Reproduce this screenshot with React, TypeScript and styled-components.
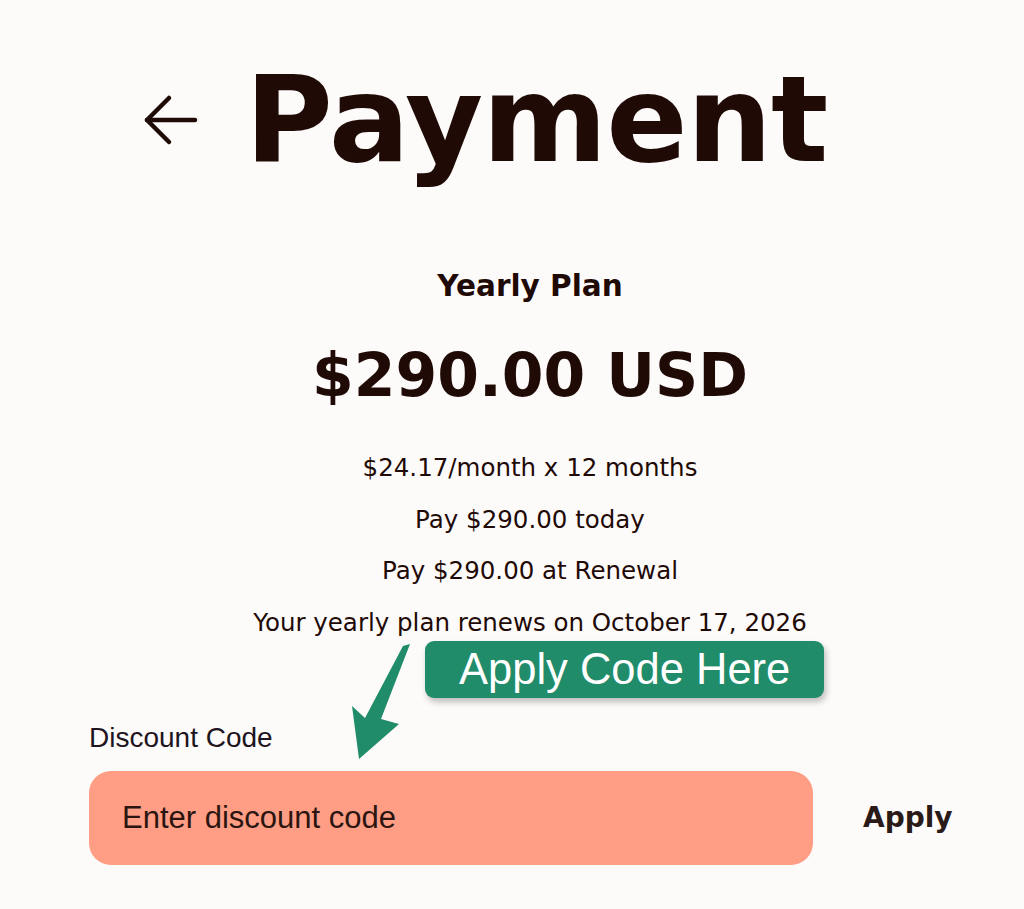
import React from "react";
import styled, { createGlobalStyle } from "styled-components";

const Global = createGlobalStyle`
  html, body { margin: 0; padding: 0; background: #fdfbfa; }
  body { font-family: "DejaVu Sans", Verdana, sans-serif; color: #1f0a06; }
`;

const Page = styled.main`
  width: 882px;
  margin-left: 89px;
  padding-top: 40px;
  display: flex;
  flex-direction: column;
`;

const Header = styled.header`
  display: flex;
  align-items: center;
  padding-left: 54px;
  gap: 46px;
  height: 160px;
`;

const BackButton = styled.button`
  border: none;
  background: none;
  padding: 0;
  display: flex;
  color: #1f0a06;
  cursor: pointer;
`;

const Title = styled.h1`
  margin: 0;
  font-family: "DejaVu Sans", Verdana, sans-serif;
  font-weight: 700;
  font-size: 120px;
  line-height: 1;
  letter-spacing: -1px;
`;

const Plan = styled.section`
  display: flex;
  flex-direction: column;
  align-items: center;
  margin-top: 68px;
`;

const PlanName = styled.h2`
  margin: 0;
  font-size: 29.5px;
  font-weight: 700;
  line-height: 36px;
`;

const Price = styled.div`
  margin-top: 31px;
  font-size: 60px;
  font-weight: 700;
  line-height: 80px;
`;

const Details = styled.div`
  margin-top: 38px;
  display: flex;
  flex-direction: column;
  align-items: center;
  gap: 21.5px;
`;

const Line = styled.p`
  margin: 0;
  font-size: 24.5px;
  line-height: 30px;
`;

const Annotation = styled.div`
  position: relative;
  height: 85px;
  display: flex;
  align-items: flex-start;
  padding-left: 336px;
`;

const Badge = styled.div`
  background: #218c6a;
  color: #fff;
  font-family: "Liberation Sans", Arial, sans-serif;
  font-size: 43.5px;
  border-radius: 9px;
  padding: 0 34px;
  height: 57px;
  line-height: 57px;
  box-shadow: 2px 4px 6px rgba(0, 0, 0, 0.25);
  margin-top: 3px;
`;

const Pointer = styled.svg`
  position: absolute;
  left: 261px;
  top: 2px;
`;

const Form = styled.section`
  display: flex;
  flex-direction: column;
`;

const Label = styled.label`
  font-family: "Liberation Sans", Arial, sans-serif;
  font-size: 28px;
  line-height: 30px;
  color: #1f1520;
`;

const Row = styled.div`
  margin-top: 18px;
  display: flex;
  align-items: center;
  gap: 50px;
`;

const Input = styled.input`
  width: 724px;
  height: 94px;
  box-sizing: border-box;
  border: none;
  border-radius: 22px;
  background: #ff9e85;
  padding: 0 33px;
  font-family: "Liberation Sans", Arial, sans-serif;
  font-size: 31px;
  color: #2a1510;
  outline: none;
  &::placeholder { color: #2a1510; opacity: 1; }
`;

const ApplyButton = styled.button`
  border: none;
  background: none;
  padding: 0;
  font-family: "DejaVu Sans", Verdana, sans-serif;
  font-weight: 700;
  font-size: 28px;
  color: #2a1a18;
  cursor: pointer;
`;

export default function App() {
  return (
    <>
      <Global />
      <Page>
        <Header>
          <BackButton aria-label="Back">
            <svg width="56" height="52" viewBox="0 0 56 52" fill="none" stroke="currentColor" strokeWidth="4.5" strokeLinecap="round" strokeLinejoin="round">
              <path d="M52 26H4" />
              <path d="M26 4L4 26L26 48" />
            </svg>
          </BackButton>
          <Title>Payment</Title>
        </Header>
        <Plan>
          <PlanName>Yearly Plan</PlanName>
          <Price>$290.00 USD</Price>
          <Details>
            <Line>$24.17/month x 12 months</Line>
            <Line>Pay $290.00 today</Line>
            <Line>Pay $290.00 at Renewal</Line>
            <Line>Your yearly plan renews on October 17, 2026</Line>
          </Details>
        </Plan>
        <Annotation>
          <Pointer width="64" height="122" viewBox="0 0 64 122">
            <path d="M53 6 L15 78 L2 66 L9 119 L49 84 L31 79 L60 4 Z" fill="#218c6a" strokeLinejoin="round" />
          </Pointer>
          <Badge>Apply Code Here</Badge>
        </Annotation>
        <Form>
          <Label htmlFor="discount">Discount Code</Label>
          <Row>
            <Input id="discount" placeholder="Enter discount code" />
            <ApplyButton>Apply</ApplyButton>
          </Row>
        </Form>
      </Page>
    </>
  );
}
